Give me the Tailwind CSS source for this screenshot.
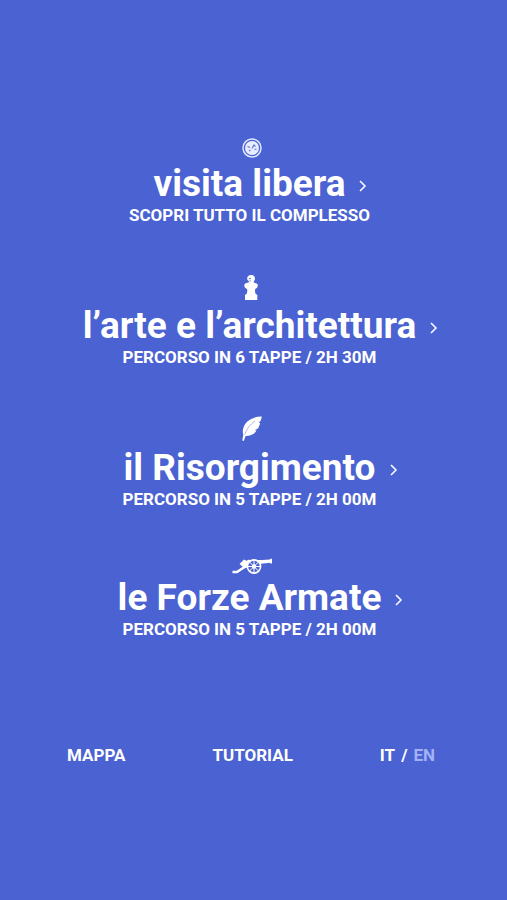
<!DOCTYPE html>
<html lang="it">
  <head>
    <meta charset="UTF-8" />
    <meta name="viewport" content="width=device-width, initial-scale=1.0" />
    <title>Percorsi di visita</title>
    <script src="https://cdn.jsdelivr.net/npm/@tailwindcss/browser@4"></script>
  </head>

  <body class="min-h-screen bg-[#4a62d2] font-[Roboto,sans-serif] font-bold text-white">
    <!-- Routes -->
    <main class="flex flex-col items-center gap-12 pt-[138px] pr-2">
      <a href="#visita-libera" class="flex flex-col items-center">
        <svg class="mb-1.5 ml-1 h-5 w-5" viewBox="0 0 20 20" fill="none">
          <circle cx="10" cy="10" r="9" stroke="#dfe7ff" stroke-width="1.5" />
          <circle cx="10" cy="10" r="7" fill="#e8eeff" />
          <path d="M5.500 8.500l2.500 1M10 10.500l2-3.500 1.500 1.500M12.500 11.500l2-.5M7 13l1.500-1" stroke="#5d74d8" stroke-width="1.200" />
        </svg>
        <h2 class="relative text-[37px] leading-10">
          visita libera
          <svg class="absolute top-4 left-full ml-3.5 h-3 w-2" viewBox="0 0 8 12" fill="none" stroke="currentColor" stroke-width="1.5"><path d="M1 1l5 5-5 5" /></svg>
        </h2>
        <p class="text-[17px] leading-[22px]">SCOPRI TUTTO IL COMPLESSO</p>
      </a>

      <a href="#arte-architettura" class="flex flex-col items-center">
        <svg class="mb-1.5 ml-1 h-[26px] w-4" viewBox="0 0 16 26" fill="currentColor">
          <path d="M4.200 4C4.500 1.800 6.500.8 8.500 1c2.700.2 3.900 2.300 3.300 4.600-.3 1.200-1.200 1.700-1.100 3 2 .5 4 .6 4.100 2.500.1 1.600-1 3.200-2.200 3.700-.6.500-.7 1.200-.6 2.200l.6 3 1.700.7V26H2v-5.300l1.700-.7.600-3c.1-1 0-1.700-.6-2.200C2.300 14.300 1.200 12.700 1.300 11 1.500 9.200 4 9 5.800 8.600c.3-.8 0-1.300-.3-1.900C4.400 6.200 4 5.200 4.200 4z" />
          <path d="M5.800 5l2.200-.8M6.500 6.800l1.200.2" fill="none" stroke="#4a62d2" stroke-width=".9" />
        </svg>
        <h2 class="relative text-[37px] leading-10">
          l’arte e l’architettura
          <svg class="absolute top-4 left-full ml-3.5 h-3 w-2" viewBox="0 0 8 12" fill="none" stroke="currentColor" stroke-width="1.5"><path d="M1 1l5 5-5 5" /></svg>
        </h2>
        <p class="text-[17px] leading-[22px]">PERCORSO IN 6 TAPPE / 2H 30M</p>
      </a>

      <a href="#risorgimento" class="flex flex-col items-center">
        <svg class="mb-1.5 ml-1 h-[26px] w-5" viewBox="0 0 20 26" fill="currentColor">
          <path d="M19.800.6C13 .4 5.500 3.500 2.300 9.500c-1.600 3-1.900 6.500-1 9.200L.3 24.500l1.500.5 1.800-5c5 0 9-2.200 11-5.500l-2-.2 3.400-1.800c1.300-2.200 1.800-4 2.200-5.600l-1.500-.2 2-2c.5-1.400.8-2.800 1.100-4.100z" />
          <path d="M2.800 18.500C4.500 13 8 8.500 13 5" fill="none" stroke="#8b9ce5" stroke-width=".7" />
        </svg>
        <h2 class="relative text-[37px] leading-10">
          il Risorgimento
          <svg class="absolute top-4 left-full ml-3.5 h-3 w-2" viewBox="0 0 8 12" fill="none" stroke="currentColor" stroke-width="1.5"><path d="M1 1l5 5-5 5" /></svg>
        </h2>
        <p class="text-[17px] leading-[22px]">PERCORSO IN 5 TAPPE / 2H 00M</p>
      </a>

      <a href="#forze-armate" class="flex flex-col items-center">
        <svg class="mb-1 ml-1 h-4 w-10" viewBox="0 0 40 16" fill="none" stroke="currentColor">
          <path d="M.5 14h4.500L14 8" stroke-width="2.400" />
          <path d="M7.500 6l4.500-4.500 2.500 1.300L17 1.500l1.500 2-2 5.500-4.500 1.500-2-2.500z" fill="currentColor" stroke="none" />
          <path d="M16 2h14l8-.4.500-.8H40v4.700h-1.500l-.5-.7-9 .9-12 2z" fill="currentColor" stroke="none" />
          <circle cx="22" cy="8.500" r="6.600" fill="#4a62d2" stroke-width="1.600" />
          <path d="M22 2v13M15.500 8.500h13M17.400 3.900l9.200 9.200M26.600 3.900l-9.200 9.200" stroke-width="1" />
          <circle cx="22" cy="8.500" r="2.200" fill="currentColor" stroke="none" />
        </svg>
        <h2 class="relative text-[37px] leading-10">
          le Forze Armate
          <svg class="absolute top-4 left-full ml-3.5 h-3 w-2" viewBox="0 0 8 12" fill="none" stroke="currentColor" stroke-width="1.5"><path d="M1 1l5 5-5 5" /></svg>
        </h2>
        <p class="text-[17px] leading-[22px]">PERCORSO IN 5 TAPPE / 2H 00M</p>
      </a>
    </main>

    <!-- Bottom menu -->
    <nav class="mt-26 flex justify-between pr-[72px] pb-12 pl-[67px] text-[17px] leading-[22px]">
      <a href="#mappa">MAPPA</a>
      <a href="#tutorial">TUTORIAL</a>
      <div class="flex gap-1.5">
        <a href="#it">IT</a>
        <span>/</span>
        <a href="#en" class="text-[#a3b2f5]">EN</a>
      </div>
    </nav>
  </body>
</html>
